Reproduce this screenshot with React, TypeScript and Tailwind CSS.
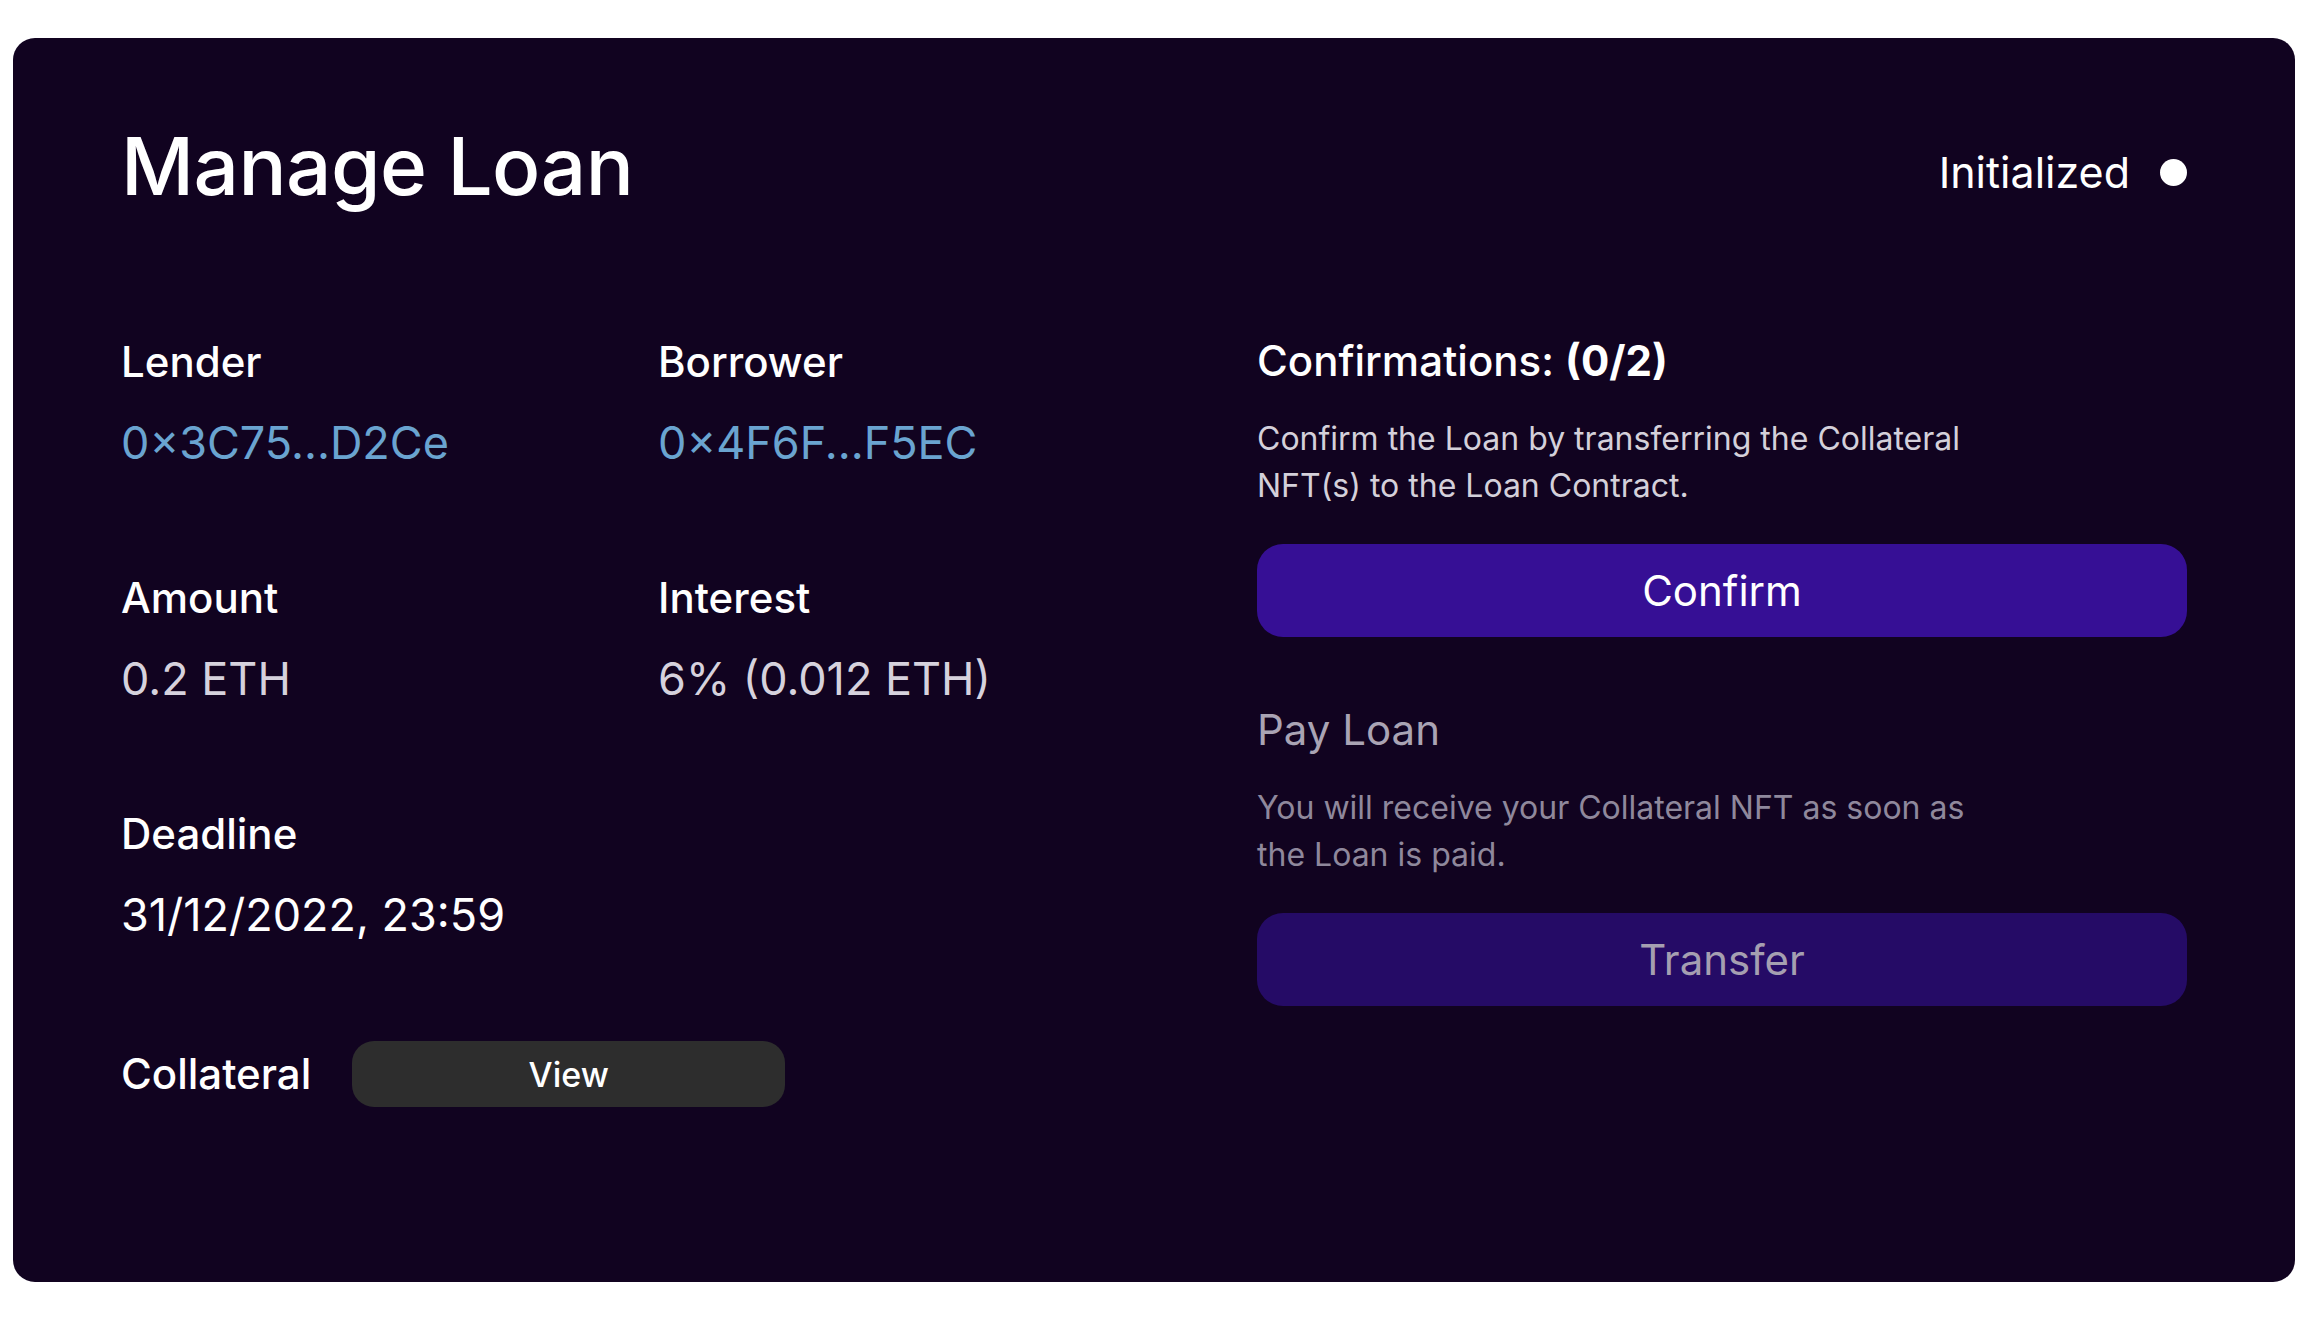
import React from "react";

export default function App() {
  return (
    <div className="min-h-screen bg-white px-[13px] pt-[38px] pb-[40px] font-['Inter',sans-serif]">
      <div className="h-[1244px] rounded-[22px] bg-[#110320] px-[108px] pt-[88px]">
        <div className="flex items-start justify-between">
          <h1 className="text-[80px] leading-[80px] font-medium text-white tracking-[-0.5px]">Manage Loan</h1>
          <div className="mt-[20px] flex items-center gap-[30px]">
            <span className="text-[43px] leading-[52px] text-white">Initialized</span>
            <span className="block h-[27px] w-[27px] rounded-full bg-white" />
          </div>
        </div>

        <div className="mt-[129px] flex">
          <div className="w-[1136px] pt-[1px]">
            <div className="grid grid-cols-[537px_1fr] gap-y-[103px]">
              <Field label="Lender" value="0×3C75...D2Ce" valueClass="text-[#6aa4d0]" />
              <Field label="Borrower" value="0×4F6F...F5EC" valueClass="text-[#6aa4d0]" />
              <Field label="Amount" value="0.2 ETH" valueClass="text-[#d6d2dd]" />
              <Field label="Interest" value="6% (0.012 ETH)" valueClass="text-[#d6d2dd]" />
              <Field label="Deadline" value="31/12/2022, 23:59" valueClass="text-white" />
            </div>
            <div className="mt-[100px] flex items-center gap-[41px]">
              <span className="text-[42px] leading-[52px] font-medium text-white">Collateral</span>
              <button className="h-[66px] w-[433px] rounded-[22px] bg-[#2d2d2d] text-[34px] font-medium text-white">
                View
              </button>
            </div>
          </div>

          <div className="flex-1">
            <div className="text-[42px] leading-[52px] font-medium text-white">
              Confirmations: <span className="font-bold">(0/2)</span>
            </div>
            <p className="mt-[28px] text-[32px] leading-[47px] text-[#d4d0da]">
              Confirm the Loan by transferring the Collateral
              <br />
              NFT(s) to the Loan Contract.
            </p>
            <button className="mt-[35px] h-[93px] w-full rounded-[26px] bg-[#360f95] text-[42px] text-white">
              Confirm
            </button>

            <div className="mt-[67px] text-[42px] leading-[52px] text-[#aaa4b4]">Pay Loan</div>
            <p className="mt-[28px] text-[32px] leading-[47px] text-[#8f889c]">
              You will receive your Collateral NFT as soon as
              <br />
              the Loan is paid.
            </p>
            <button className="mt-[35px] h-[93px] w-full rounded-[26px] bg-[#250b66] text-[42px] text-[#a59fb1]">
              Transfer
            </button>
          </div>
        </div>
      </div>
    </div>
  );
}

function Field({ label, value, valueClass }: { label: string; value: string; valueClass: string }) {
  return (
    <div>
      <div className="text-[42px] leading-[52px] font-medium text-white">{label}</div>
      <div className={`mt-[29px] text-[45px] leading-[52px] ${valueClass}`}>{value}</div>
    </div>
  );
}
